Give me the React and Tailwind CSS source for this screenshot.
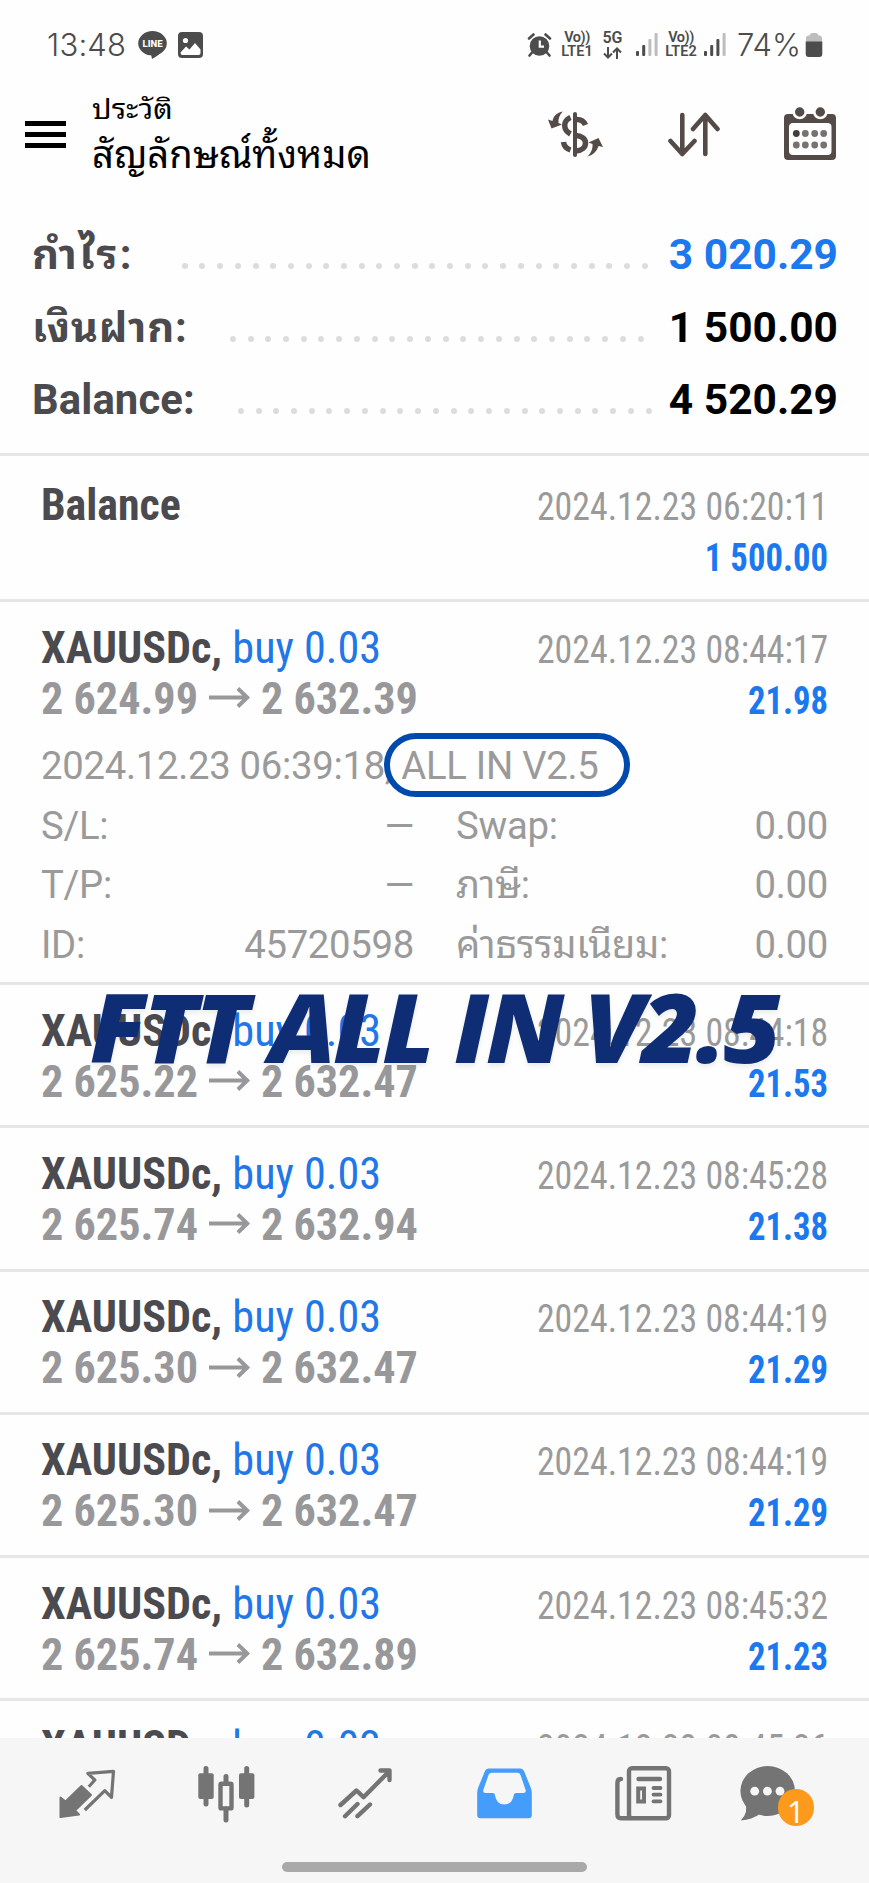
import React from 'react';

const summary = [
  { label: 'กำไร:', value: '3 020.29', dots: 27, color: 'text-[#1b78ee]', labelClass: 'tracking-[2.4px]', dotsClass: 'w-[466px] mr-[21px]' },
  { label: 'เงินฝาก:', value: '1 500.00', dots: 24, color: 'text-black', labelClass: 'tracking-[0.7px]', dotsClass: 'w-[414px] mr-[25px]' },
  { label: 'Balance:', value: '4 520.29', dots: 24, color: 'text-black', labelClass: 'tracking-[0.1px]', dotsClass: 'w-[414px] mr-[17px]' },
];

const firstDeal = { open: '2 624.99', close: '2 632.39', date: '2024.12.23 08:44:17', profit: '21.98' };

const deals = [
  { open: '2 625.22', close: '2 632.47', date: '2024.12.23 08:44:18', profit: '21.53' },
  { open: '2 625.74', close: '2 632.94', date: '2024.12.23 08:45:28', profit: '21.38' },
  { open: '2 625.30', close: '2 632.47', date: '2024.12.23 08:44:19', profit: '21.29' },
  { open: '2 625.30', close: '2 632.47', date: '2024.12.23 08:44:19', profit: '21.29' },
  { open: '2 625.74', close: '2 632.89', date: '2024.12.23 08:45:32', profit: '21.23' },
  { open: '2 625.74', close: '2 632.80', date: '2024.12.23 08:45:26', profit: '21.20' },
];

const Signal = ({ level }) => (
  <svg width="22" height="24" viewBox="0 0 22 24">
    {[0, 1, 2, 3].map((i) => (
      <rect
        key={i}
        x={i * 6.2}
        y={[18, 12, 6, 0][i]}
        width="3"
        height={[5, 11, 17, 23][i]}
        rx="1"
        fill={i < level ? '#4c4c4c' : '#bdbdbd'}
      />
    ))}
  </svg>
);

const VoLte = ({ n }) => (
  <div className="w-[32px] text-center text-[14.5px] leading-[14px] font-semibold whitespace-nowrap">
    <div className="tracking-[-0.5px]">Vo))</div>
    <div>LTE{n}</div>
  </div>
);

const StatusBar = () => (
  <div className="flex h-[90px] items-center pl-[47px] pr-[46px] text-[#4c4c4c]">
    <span className="w-[79px] font-['Inter',sans-serif] text-[31px] font-light whitespace-nowrap tracking-[0.2px]">13:48</span>
    <svg className="ml-[12px]" width="29" height="28" viewBox="0 0 29 28">
      <ellipse cx="14.5" cy="12.3" rx="14.3" ry="12.2" fill="#4c4c4c" />
      <path d="M13 23 L14 28 C18 26 22 23 25 19 Z" fill="#4c4c4c" />
      <text x="14.5" y="16" textAnchor="middle" fontSize="9.5" fontWeight="800" fill="#fff" fontFamily="Roboto, sans-serif">LINE</text>
    </svg>
    <svg className="ml-[11px]" width="25" height="26" viewBox="0 0 25 26">
      <rect width="25" height="26" rx="4" fill="#4c4c4c" />
      <circle cx="7.5" cy="8.5" r="2.6" fill="#fff" />
      <path d="M2.5 20.5 L8 14.5 L11.5 17.5 L17 11 L22.5 17.5 V21 Q22.5 23 20.5 23 H4.5 Q2.5 23 2.5 20.5Z" fill="#fff" />
    </svg>
    <div className="ml-auto flex items-center">
      <svg width="25" height="24" viewBox="0 0 25 24">
        <circle cx="12.5" cy="13" r="9.8" fill="#4c4c4c" />
        <path d="M2 5.5 L6.5 1.5 M23 5.5 L18.5 1.5 M5.5 19 L2.5 22.5 M19.5 19 L22.5 22.5" stroke="#4c4c4c" strokeWidth="2.6" strokeLinecap="round" />
        <path d="M12.8 7.5 V13.7 H17" fill="none" stroke="#fff" strokeWidth="2.2" />
      </svg>
      <div className="ml-[9px]"><VoLte n="1" /></div>
      <div className="ml-[9px] flex w-[21px] flex-col items-center">
        <span className="text-[16px] leading-[14px] font-semibold">5G</span>
        <svg className="mt-[2px]" width="19" height="12" viewBox="0 0 19 12" fill="none" stroke="#4c4c4c" strokeWidth="2">
          <path d="M5 0 V10.5 M1 6.5 L5 10.5 L9 6.5 M14 12 V1.5 M10 5.5 L14 1.5 L18 5.5" />
        </svg>
      </div>
      <div className="ml-[13px]"><Signal level={2} /></div>
      <div className="ml-[7px]"><VoLte n="2" /></div>
      <div className="ml-[7px]"><Signal level={3} /></div>
      <span className="ml-[11px] w-[64px] font-['Inter',sans-serif] text-[31px] font-light whitespace-nowrap">74%</span>
      <svg className="ml-[4px]" width="18" height="26" viewBox="0 0 18 26">
        <path d="M1 10 V6 Q1 4 3 3.5 H4.5 Q5 1 7 1 H11 Q13 1 13.5 3.5 H15 Q17 4 17 6 V10Z" fill="#bdbdbd" />
        <path d="M.7 9.5 H17.3 V22 Q17.3 25 14.3 25 H3.7 Q.7 25 .7 22Z" fill="#4c4c4c" />
      </svg>
    </div>
  </div>
);

const Toolbar = () => (
  <div className="flex h-[129px] items-start pl-[25px] pr-[33px]">
    <div className="mt-[31px] flex w-[41px] flex-col gap-[6px]">
      <div className="h-[5px] bg-black" />
      <div className="h-[5px] bg-black" />
      <div className="h-[5px] bg-black" />
    </div>
    <div className="ml-[26px] text-black whitespace-nowrap">
      <div className="h-[40px] origin-left scale-x-[1.09] text-[28px] leading-[39px]">ประวัติ</div>
      <div className="h-[50px] text-[38.2px] leading-[50px]">สัญลักษณ์ทั้งหมด</div>
    </div>
    <div className="mt-[17px] ml-auto flex items-center gap-[64px]">
      <svg width="59" height="54" viewBox="0 0 59 54" fill="none" stroke="#544b49" strokeWidth="5.5">
        <path d="M30 7 V48" strokeWidth="4" strokeLinecap="round" />
        <path d="M32 12.5 C36 12.5 39 14.5 40.5 18 M25.5 10.5 C17.5 14 18 23 25.5 27 M31 28.5 C37 29 40.5 32 40.5 36 C40.5 40.5 37 43.5 31 44 M25.5 43 C21 41.5 19 39 18.5 35" />
        <path d="M17.7 4.5 C12 5.5 8.5 9 7.5 14 L3 12.5 L6.5 21.5 L17 17.5 L13.5 16 C13 12 14.5 8 17.7 4.5Z" fill="#544b49" stroke="none" />
        <path d="M42.5 49.5 C48.5 48 52 44 53.5 39 L58 40 L53.5 31 L43.5 35.5 L47.5 37 C48 41.5 46 46 42.5 49.5Z" fill="#544b49" stroke="none" />
      </svg>
      <svg width="52" height="54" viewBox="0 0 52 54" fill="none" stroke="#544b49" strokeWidth="4.6" strokeLinecap="round" strokeLinejoin="round">
        <path d="M14.3 8 V47 M2.5 34 L14.3 47 L26.5 34 M37.3 47 V8 M25 22 L37.3 8 L49.5 22" />
      </svg>
      <svg width="52" height="54" viewBox="0 0 52 54">
        <path d="M4 7 H48 Q52 7 52 11 V49 Q52 53 48 53 H4 Q0 53 0 49 V11 Q0 7 4 7Z" fill="#544b49" />
        <rect x="5" y="16" width="42.5" height="32" rx="4" fill="#fefefe" />
        {[15.7, 36.3].map((x) => (
          <circle key={x} cx={x} cy="5" r="6" fill="#544b49" stroke="#fefefe" strokeWidth="2.6" />
        ))}
        {[12.3, 21.3, 30.7, 39.7].map((x) => (
          <g key={x} fill="#777170">
            <circle cx={x} cy="26.5" r="3.4" fill={x === 12.3 ? '#443c3a' : '#777170'} />
            <circle cx={x} cy="38" r="3.4" />
          </g>
        ))}
      </svg>
    </div>
  </div>
);

const Summary = () => (
  <div className="h-[237px] border-b-[3px] border-[#e6e6e6] pr-[31px] pl-[32px]">
    {summary.map((row) => (
      <div key={row.label} className="flex h-[72.5px] items-baseline text-[42.5px] leading-[72.5px] font-bold whitespace-nowrap">
        <span className={`text-[41.8px] text-[#4b4a4e] ${row.labelClass}`}>{row.label}</span>
        <div className={`ml-auto flex justify-between ${row.dotsClass}`}>
          {Array.from({ length: row.dots }, (_, i) => (
            <span key={i} className="h-[6px] w-[6px] rounded-full bg-[#dcdcdc]" />
          ))}
        </div>
        <span className={row.color}>{row.value}</span>
      </div>
    ))}
  </div>
);

const Arrow = () => (
  <svg className="relative top-[-4px] mx-[11px] inline-block" width="42" height="21" viewBox="0 0 42 21" fill="none" stroke="#98989a" strokeWidth="4">
    <path d="M0 10.5 H39 M29.5 1.5 L39 10.5 L29.5 19.5" />
  </svg>
);

const DealLines = ({ deal }) => (
  <div className="pt-[19.5px] font-['Roboto_Condensed',Roboto,sans-serif] whitespace-nowrap">
    <div className="flex h-[51px] items-baseline justify-between leading-[51px]">
      <div className="origin-left scale-x-[0.982] text-[45px]">
        <span className="font-bold text-[#4b4a4e]">XAUUSDc, </span>
        <span className="text-[#2176e8]">buy 0.03</span>
      </div>
      <span className="origin-right scale-x-[0.93] text-[38.5px] text-[#9a9a9a]">{deal.date}</span>
    </div>
    <div className="flex h-[51px] items-baseline justify-between leading-[51px] font-bold">
      <div className="origin-left scale-x-[0.982] text-[45px] text-[#98989a]">
        {deal.open}
        <Arrow />
        {deal.close}
      </div>
      <span className="origin-right scale-x-[0.9] text-[38.5px] text-[#1b78ee]">{deal.profit}</span>
    </div>
  </div>
);

const DetailRow = ({ label, value, label2, value2 }) => (
  <div className="flex h-[59.7px] items-baseline leading-[59.7px] whitespace-nowrap">
    <span>{label}</span>
    <span className="ml-auto">{value}</span>
    <div className="ml-[42px] flex w-[372px] items-baseline justify-between">
      <span>{label2}</span>
      <span>{value2}</span>
    </div>
  </div>
);

const tabIcons = [
  <svg key="quotes" width="58" height="58" viewBox="0 0 58 58" fill="none" stroke="#747474" strokeWidth="3.2" strokeLinejoin="round">
    <path d="M26.8 45 L46.8 25.7 L53.5 32.3 L55.5 6.3 L29.8 8.3 L36.8 15 L30.8 21.7" />
    <path d="M2.5 32.5 L7.5 36.5 L23.5 21 L33 30 L17 45.5 L21 49.5 L2.5 52Z" fill="#747474" strokeWidth="2" />
  </svg>,
  <svg key="chart" width="58" height="58" viewBox="0 0 58 58" fill="#747474">
    <rect x="1.3" y="8.3" width="15.4" height="25.6" rx="2" />
    <rect x="42" y="8.3" width="15.4" height="25.6" rx="2" />
    <rect x="23.5" y="18.8" width="11" height="24.6" rx="1" fill="none" stroke="#747474" strokeWidth="4.4" />
    <path d="M9 3.5 V39 M49.7 3.5 V40 M29 11.5 V18 M29 44 V55" stroke="#747474" strokeWidth="5" strokeLinecap="round" />
  </svg>,
  <svg key="trade" width="58" height="58" viewBox="0 0 58 58" fill="none" stroke="#747474" strokeWidth="4.4" strokeLinecap="round" strokeLinejoin="round">
    <path d="M4.5 40 L20.5 25.5 L27.5 32.2 L53.5 6 M44.5 5.5 H53.5 V15 M9 51.2 L21.5 39 M21.5 51.2 L34 39.5" />
  </svg>,
  <svg key="history" width="58" height="58" viewBox="0 0 58 58">
    <path
      fillRule="evenodd"
      fill="#449cfb"
      d="M13.5 3.5 H45.5 Q48 3.5 49 6 L55.5 22 Q56.8 25 56.8 28 V50 Q56.8 53.3 53.5 53.3 H5.5 Q2.2 53.3 2.2 50 V28 Q2.2 25 3.4 22 L10 6 Q11 3.5 13.5 3.5Z M16.5 7.8 Q14.3 7.8 13.5 10 L8.3 25 Q7.7 28 10.5 28 H18 Q20 28 20 30.5 Q21.5 39.5 29.3 39.5 Q37 39.5 38.7 30.5 Q38.7 28 41 28 H48.5 Q51.3 28 50.6 25 L45.5 10 Q44.8 7.8 42.5 7.8Z"
    />
  </svg>,
  <svg key="news" width="58" height="58" viewBox="0 0 58 58" fill="none" stroke="#747474" strokeWidth="4.4" strokeLinecap="round">
    <rect x="15" y="3.2" width="40" height="50" rx="3" />
    <path d="M7 14 Q3.4 14 3.4 18 V49.5 Q3.4 53.2 7 53.2 H16" />
    <path d="M24.5 14 H46" />
    <rect x="24.2" y="23.5" width="5.8" height="13" strokeWidth="4" />
    <path d="M39.5 23 H46.5 M39.5 29.6 H46.5 M39.5 36.3 H46.5" strokeWidth="3.8" />
  </svg>,
  <div key="messages" className="relative">
    <svg width="84" height="58" viewBox="0 0 84 58">
      <ellipse cx="27.7" cy="26" rx="27.3" ry="25" fill="#747474" />
      <path d="M5 38 Q9 47 .8 55.5 Q12 54.5 20 49Z" fill="#747474" />
      <circle cx="14.7" cy="26.2" r="4.4" fill="#f6f6f6" />
      <circle cx="27.4" cy="26.2" r="4.4" fill="#f6f6f6" />
      <circle cx="40" cy="26.2" r="4.4" fill="#f6f6f6" />
    </svg>
    <span className="absolute top-[24px] left-[37.5px] flex h-[37px] w-[36px] items-center justify-center rounded-full bg-[#fd9a1c] pt-[7px] font-['Noto_Sans',sans-serif] text-[31px] leading-none text-white">
      1
    </span>
  </div>,
];

const TabBar = () => (
  <div className="relative h-[145px] shrink-0 bg-[#f6f6f7]">
    <div className="grid grid-cols-6 px-[17px] pt-[27px]">
      {tabIcons.map((icon) => (
        <div key={icon.key} className="flex justify-center">{icon}</div>
      ))}
    </div>
    <div className="mx-auto mt-[39px] h-[10px] w-[305px] rounded-full bg-[#a9a9a9]" />
  </div>
);

export default function App() {
  return (
    <div className="flex h-[1883px] w-[869px] flex-col overflow-hidden bg-[#fefefe] font-[Roboto,'Noto_Sans_Thai_Looped','Noto_Looped_Thai','Loma','Garuda','Waree','Noto_Sans_Thai',sans-serif]">
      <StatusBar />
      <Toolbar />
      <Summary />
      <div className="min-h-0 flex-1 overflow-hidden">
        <div className="h-[146px] border-b-[3px] border-[#e6e6e6] px-[41px] pt-[22.5px] font-['Roboto_Condensed',Roboto,sans-serif]">
          <div className="flex h-[50px] items-baseline justify-between leading-[51px]">
            <span className="origin-left scale-x-[0.975] text-[45px] font-bold text-[#4b4a4e]">Balance</span>
            <span className="origin-right scale-x-[0.93] text-[38.5px] text-[#9a9a9a]">2024.12.23 06:20:11</span>
          </div>
          <div className="origin-right scale-x-[0.9] pt-[3px] text-right text-[38.5px] leading-[51px] font-bold text-[#1b78ee]">1 500.00</div>
        </div>

        <div className="h-[383px] border-b-[3px] border-[#e6e6e6] px-[41px]">
          <DealLines deal={firstDeal} />
          <div className="pt-[12.5px] text-[38.3px] tracking-[-0.3px] text-[#9a9a9a]">
            <div className="relative flex h-[59.7px] items-baseline leading-[59.7px] whitespace-pre">
              2024.12.23 06:39:18, ALL IN V2.5
              <div className="absolute top-[-3px] left-[343px] h-[64px] w-[246px] rounded-full border-[6.5px] border-[#004aad]" />
            </div>
            <DetailRow label="S/L:" value="—" label2="Swap:" value2="0.00" />
            <DetailRow label="T/P:" value="—" label2="ภาษี:" value2="0.00" />
            <DetailRow label="ID:" value="45720598" label2="ค่าธรรมเนียม:" value2="0.00" />
          </div>
        </div>

        <div className="relative">
          {deals.map((deal, i) => (
            <div key={i} className="h-[143.3px] border-b-[3px] border-[#e6e6e6] px-[41px]">
              <DealLines deal={deal} />
            </div>
          ))}
          <div className="absolute top-[-25.5px] left-[90px] origin-left scale-x-[1.027] font-['Open_Sans',sans-serif] text-[96.5px] leading-[131px] font-extrabold tracking-[-3px] whitespace-nowrap text-[#0f2d75] italic [text-shadow:0_3px_5px_rgba(0,0,0,0.08)]">
            FTT ALL IN V2.5
          </div>
        </div>
      </div>
      <TabBar />
    </div>
  );
}
